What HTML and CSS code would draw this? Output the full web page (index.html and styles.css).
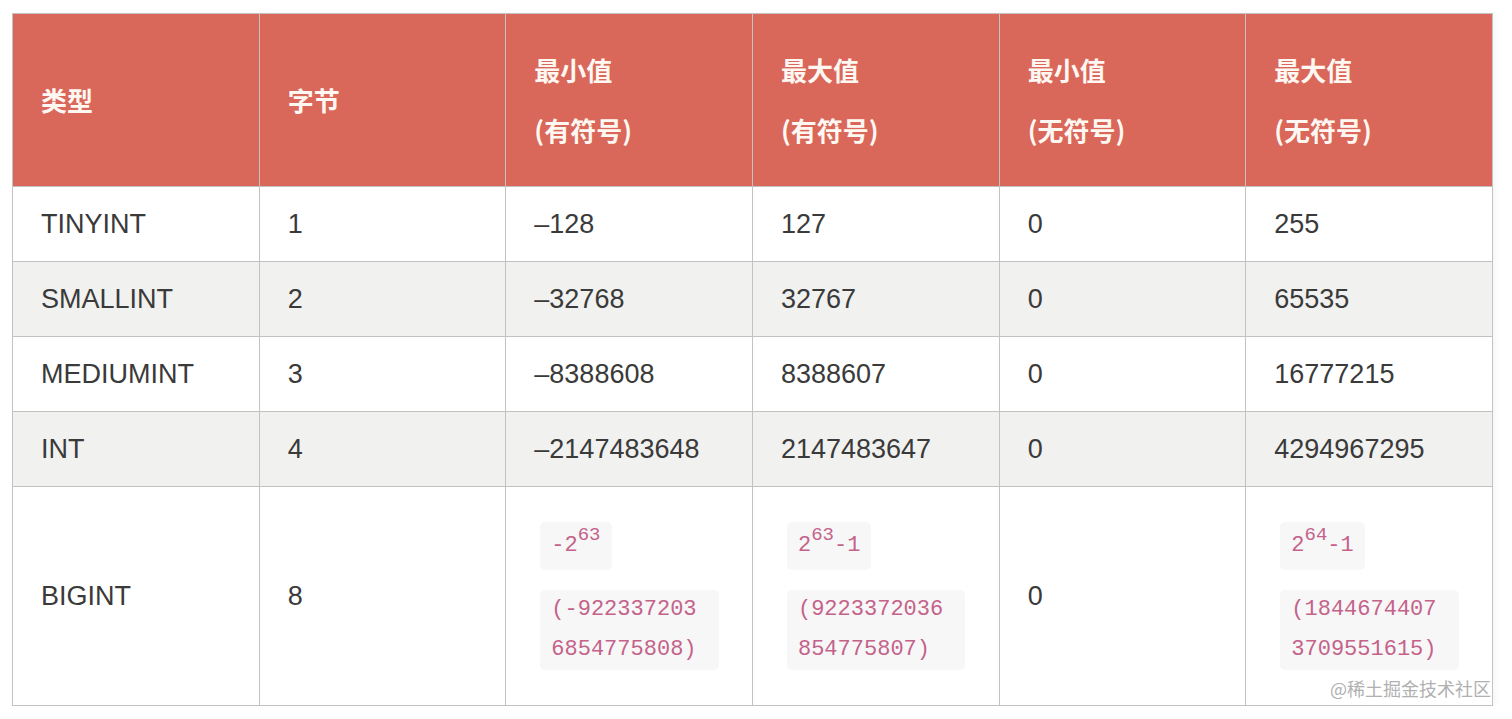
FILE: index.html
```html
<!DOCTYPE html>
<html lang="zh-CN">
<head>
<meta charset="utf-8">
<title>MySQL 整数类型</title>
<link rel="stylesheet" href="styles.css">
</head>
<body>
<div class="page">
  <table class="int-table">
    <thead>
      <tr>
        <th>类型</th>
        <th>字节</th>
        <th>最小值<br>(有符号)</th>
        <th>最大值<br>(有符号)</th>
        <th>最小值<br>(无符号)</th>
        <th>最大值<br>(无符号)</th>
      </tr>
    </thead>
    <tbody>
      <tr><td>TINYINT</td><td>1</td><td>–128</td><td>127</td><td>0</td><td>255</td></tr>
      <tr class="alt"><td>SMALLINT</td><td>2</td><td>–32768</td><td>32767</td><td>0</td><td>65535</td></tr>
      <tr><td>MEDIUMINT</td><td>3</td><td>–8388608</td><td>8388607</td><td>0</td><td>16777215</td></tr>
      <tr class="alt"><td>INT</td><td>4</td><td>–2147483648</td><td>2147483647</td><td>0</td><td>4294967295</td></tr>
      <tr class="big">
        <td>BIGINT</td>
        <td>8</td>
        <td>
          <div class="code-stack">
            <code class="code short">-2<sup>63</sup></code>
            <code class="code long">(-922337203<br>6854775808)</code>
          </div>
        </td>
        <td>
          <div class="code-stack">
            <code class="code short">2<sup>63</sup>-1</code>
            <code class="code long">(9223372036<br>854775807)</code>
          </div>
        </td>
        <td>0</td>
        <td class="last">
          <div class="code-stack">
            <code class="code short">2<sup>64</sup>-1</code>
            <code class="code long">(1844674407<br>3709551615)</code>
          </div>
          <span class="watermark">@稀土掘金技术社区</span>
        </td>
      </tr>
    </tbody>
  </table>
</div>
</body>
</html>
```
FILE: styles.css
```css
html, body {
  margin: 0;
  padding: 0;
  background: #ffffff;
}

.page {
  padding: 13px 0 0 12px;
}

.int-table {
  border-collapse: collapse;
  table-layout: fixed;
  width: 1481px;
  font-family: "Liberation Sans", Arial, "Noto Sans CJK SC", sans-serif;
  font-size: 27px;
  color: #3a3a3a;
  box-shadow: 3px 0 6px rgba(0, 0, 0, 0.04);
}

.int-table th,
.int-table td {
  border: 1px solid #c2c2c2;
  text-align: left;
  vertical-align: middle;
}

.int-table th {
  background: #d9675a;
  color: #fff8f2;
  font-family: "Noto Sans CJK SC", "Liberation Sans", sans-serif;
  font-weight: 700;
  font-size: 26px;
  line-height: 60px;
  height: 120px;
  padding: 26px 28px;
}

.int-table td {
  line-height: 38px;
  height: 38px;
  padding: 18px 28px;
}

.int-table tr.alt td {
  background: #f1f1f0;
}

.int-table tr.big td {
  height: 182px;
  padding: 18px 28px;
}

.int-table td.last {
  position: relative;
}

.code-stack {
  display: flex;
  flex-direction: column;
  align-items: flex-start;
  gap: 20px;
  margin-left: 6px;
}

.code {
  display: block;
  font-family: "Liberation Mono", "Courier New", monospace;
  font-size: 22px;
  color: #c4628a;
  background: #f7f7f7;
  border-radius: 5px;
  padding: 0 11px;
}

.code.short {
  line-height: 40px;
  padding-top: 4px;
  padding-bottom: 4px;
}

.code.long {
  line-height: 40px;
  padding-right: 22px;
}

.code sup {
  font-size: 19px;
  line-height: 0;
  vertical-align: 11px;
}

.watermark {
  position: absolute;
  right: 1px;
  bottom: 7px;
  font-family: "Noto Sans CJK SC", sans-serif;
  font-size: 18px;
  line-height: 20px;
  color: #b0b0b0;
  white-space: nowrap;
}
```
